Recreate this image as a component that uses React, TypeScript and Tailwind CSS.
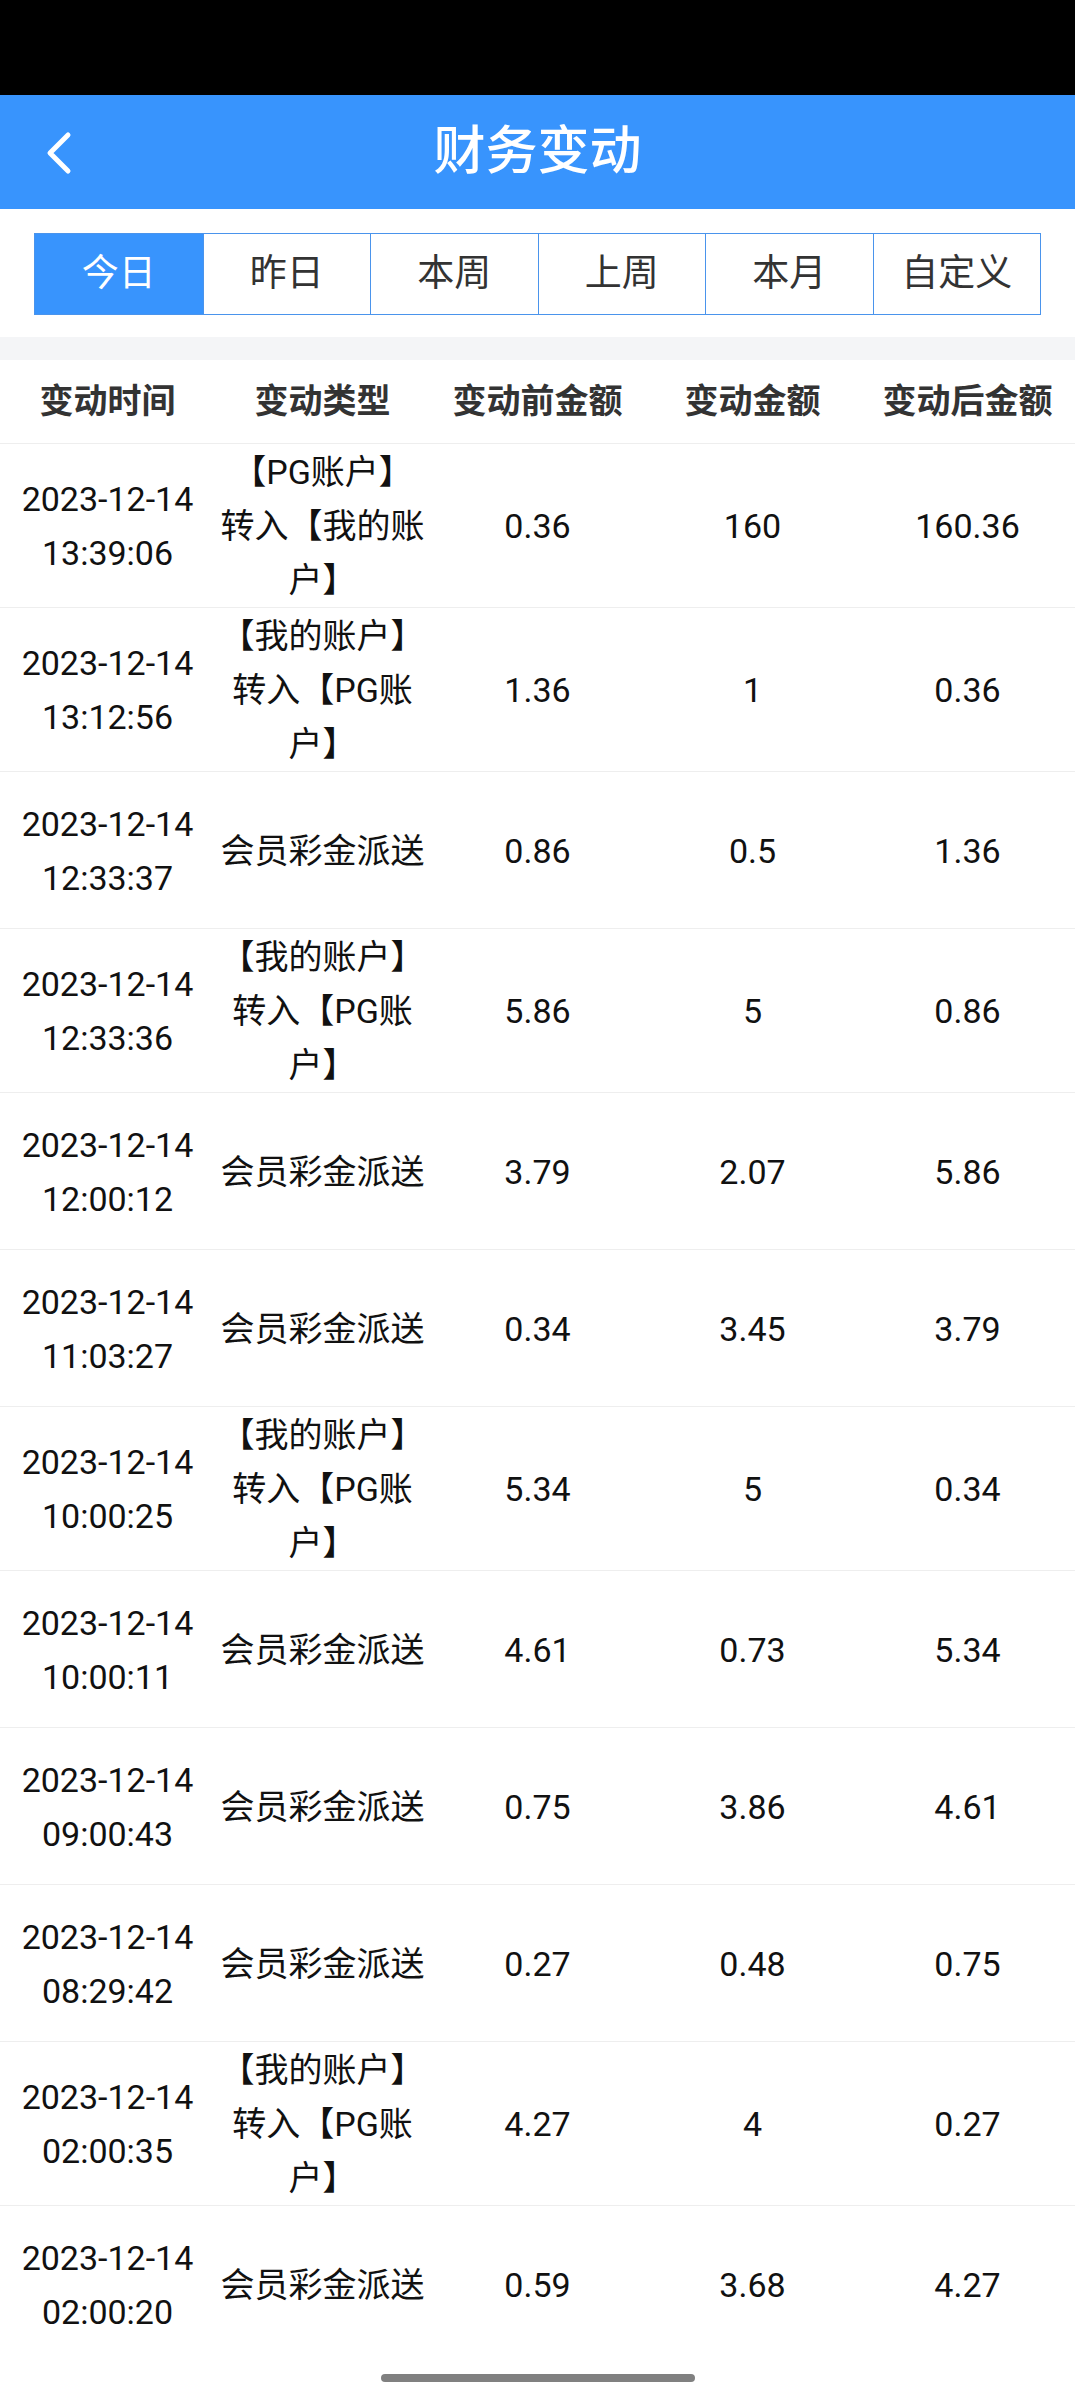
import React from "react";

type Row = { d: string; t: string; type: string; before: string; amt: string; after: string };

const A = "【我的账户】转入【PG账户】";
const M = "会员彩金派送";

const rows: Row[] = [
  { d: "2023-12-14", t: "13:39:06", type: "【PG账户】转入【我的账户】", before: "0.36", amt: "160", after: "160.36" },
  { d: "2023-12-14", t: "13:12:56", type: A, before: "1.36", amt: "1", after: "0.36" },
  { d: "2023-12-14", t: "12:33:37", type: M, before: "0.86", amt: "0.5", after: "1.36" },
  { d: "2023-12-14", t: "12:33:36", type: A, before: "5.86", amt: "5", after: "0.86" },
  { d: "2023-12-14", t: "12:00:12", type: M, before: "3.79", amt: "2.07", after: "5.86" },
  { d: "2023-12-14", t: "11:03:27", type: M, before: "0.34", amt: "3.45", after: "3.79" },
  { d: "2023-12-14", t: "10:00:25", type: A, before: "5.34", amt: "5", after: "0.34" },
  { d: "2023-12-14", t: "10:00:11", type: M, before: "4.61", amt: "0.73", after: "5.34" },
  { d: "2023-12-14", t: "09:00:43", type: M, before: "0.75", amt: "3.86", after: "4.61" },
  { d: "2023-12-14", t: "08:29:42", type: M, before: "0.27", amt: "0.48", after: "0.75" },
  { d: "2023-12-14", t: "02:00:35", type: A, before: "4.27", amt: "4", after: "0.27" },
  { d: "2023-12-14", t: "02:00:20", type: M, before: "0.59", amt: "3.68", after: "4.27" },
];

const tabs = ["今日", "昨日", "本周", "上周", "本月", "自定义"];
const heads = ["变动时间", "变动类型", "变动前金额", "变动金额", "变动后金额"];

export default function App() {
  return (
    <div
      className="relative h-[2400px] w-[1075px] overflow-hidden bg-white"
      style={{ fontFamily: 'Roboto, "Noto Sans CJK SC", "Noto Sans", sans-serif' }}
    >
      <div className="h-[95px] bg-black" />
      <header className="relative flex h-[114px] items-center justify-center bg-[#3894fd]">
        <button className="absolute left-[44px] top-[36px] flex h-[44px] w-[30px] items-center justify-center">
          <svg width="30" height="44" viewBox="0 0 30 44" fill="none">
            <polyline points="24,4 6,22 24,40" stroke="white" strokeWidth="5" strokeLinecap="round" strokeLinejoin="round" />
          </svg>
        </button>
        <h1 className="text-[52px] leading-none font-medium text-white">财务变动</h1>
      </header>

      <div className="px-[34px] pt-[24px] pb-[22px]">
        <div className="grid h-[82px] grid-cols-6 border border-[#4a94ec]">
          {tabs.map((t, i) => (
            <div
              key={t}
              className={
                i === 0
                  ? "flex items-center justify-center bg-[#3894fd] text-[37px] text-white"
                  : "flex items-center justify-center border-l border-[#4a94ec] bg-white text-[37px] text-[#333333]"
              }
            >
              {t}
            </div>
          ))}
        </div>
      </div>

      <div className="h-[23px] bg-[#f4f5f7]" />

      <div className="grid h-[84px] grid-cols-5 items-center border-b border-[#eeeeee]">
        {heads.map((h) => (
          <div key={h} className="text-center text-[34px] font-bold text-[#333333]">
            {h}
          </div>
        ))}
      </div>

      {rows.map((r, i) => (
        <div
          key={i}
          className={
            i === rows.length - 1
              ? "grid min-h-[157px] grid-cols-5 items-center pt-px text-[34px] leading-[54px] text-[#111111]"
              : "grid min-h-[157px] grid-cols-5 items-center border-b border-[#eeeeee] pt-px text-[34px] leading-[54px] text-[#111111]"
          }
        >
          <div className="text-center">
            <div>{r.d}</div>
            <div>{r.t}</div>
          </div>
          <div className="flex justify-center">
            <div className="w-[210px] text-center">{r.type}</div>
          </div>
          <div className="text-center">{r.before}</div>
          <div className="text-center">{r.amt}</div>
          <div className="text-center">{r.after}</div>
        </div>
      ))}

      <div className="absolute bottom-[18px] left-[381px] h-[8px] w-[314px] rounded-full bg-[#808080]" />
    </div>
  );
}
